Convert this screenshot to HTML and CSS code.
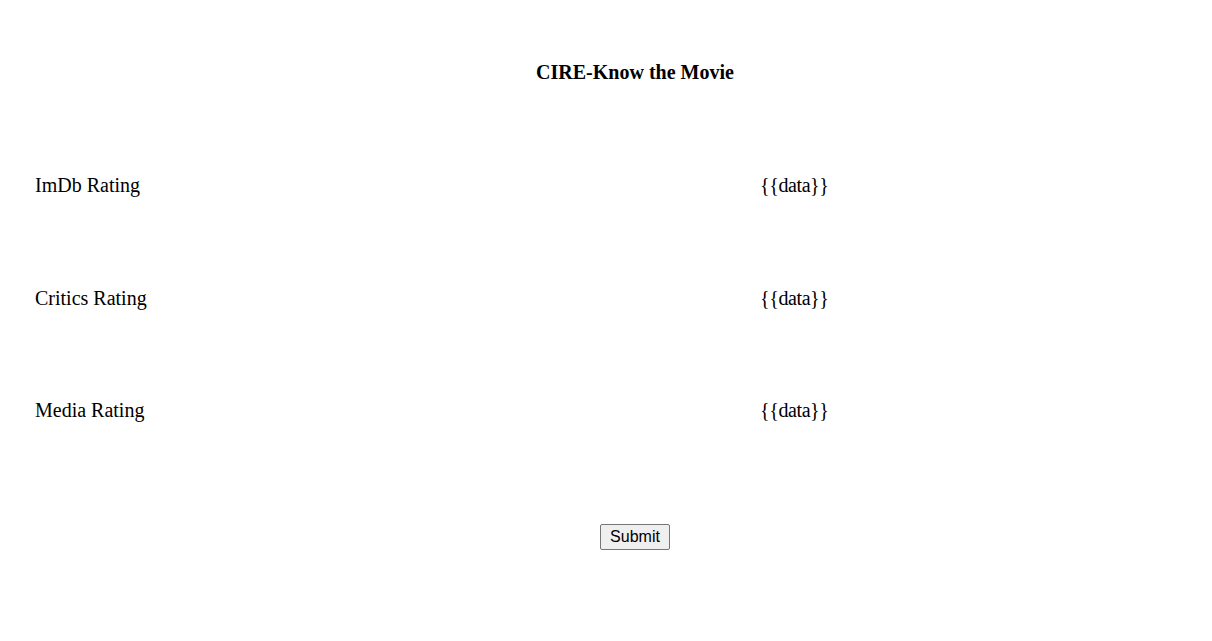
FILE: index.html
```html
<!DOCTYPE html>
<html>
<head>
<meta charset="utf-8">
<title>CIRE-Know the Movie</title>
<link rel="stylesheet" href="styles.css">
</head>
<body>
<div class="page">
  <h1 class="title">CIRE-Know the Movie</h1>
  <div class="ratings">
    <div class="label">ImDb Rating</div>
    <div class="value">{{data}}</div>
    <div class="label">Critics Rating</div>
    <div class="value">{{data}}</div>
    <div class="label">Media Rating</div>
    <div class="value">{{data}}</div>
  </div>
  <div class="actions">
    <button class="submit" type="button">Submit</button>
  </div>
</div>
</body>
</html>
```
FILE: styles.css
```css
html, body {
  margin: 0;
  padding: 0;
  background: #fff;
}
body {
  font-family: "Liberation Serif", "Times New Roman", serif;
  font-size: 20px;
  color: #000;
}
.page {
  width: 1212px;
}
.title {
  margin: 61px 0 0 58px;
  font-size: 20px;
  line-height: 23px;
  font-weight: bold;
  text-align: center;
}
.ratings {
  display: grid;
  grid-template-columns: 725px auto;
  row-gap: 89.5px;
  margin-top: 90px;
  padding-left: 35px;
  line-height: 23px;
}
.value {
  letter-spacing: -0.4px;
}
.actions {
  margin-top: 102px;
  padding-left: 58px;
  text-align: center;
}
.submit {
  font-family: "Liberation Sans", Arial, sans-serif;
  font-size: 16px;
  line-height: 18px;
  padding: 3px 9px;
  color: #000;
  background: #efefef;
  border: 1px solid #767676;
  border-radius: 2px;
}
```
